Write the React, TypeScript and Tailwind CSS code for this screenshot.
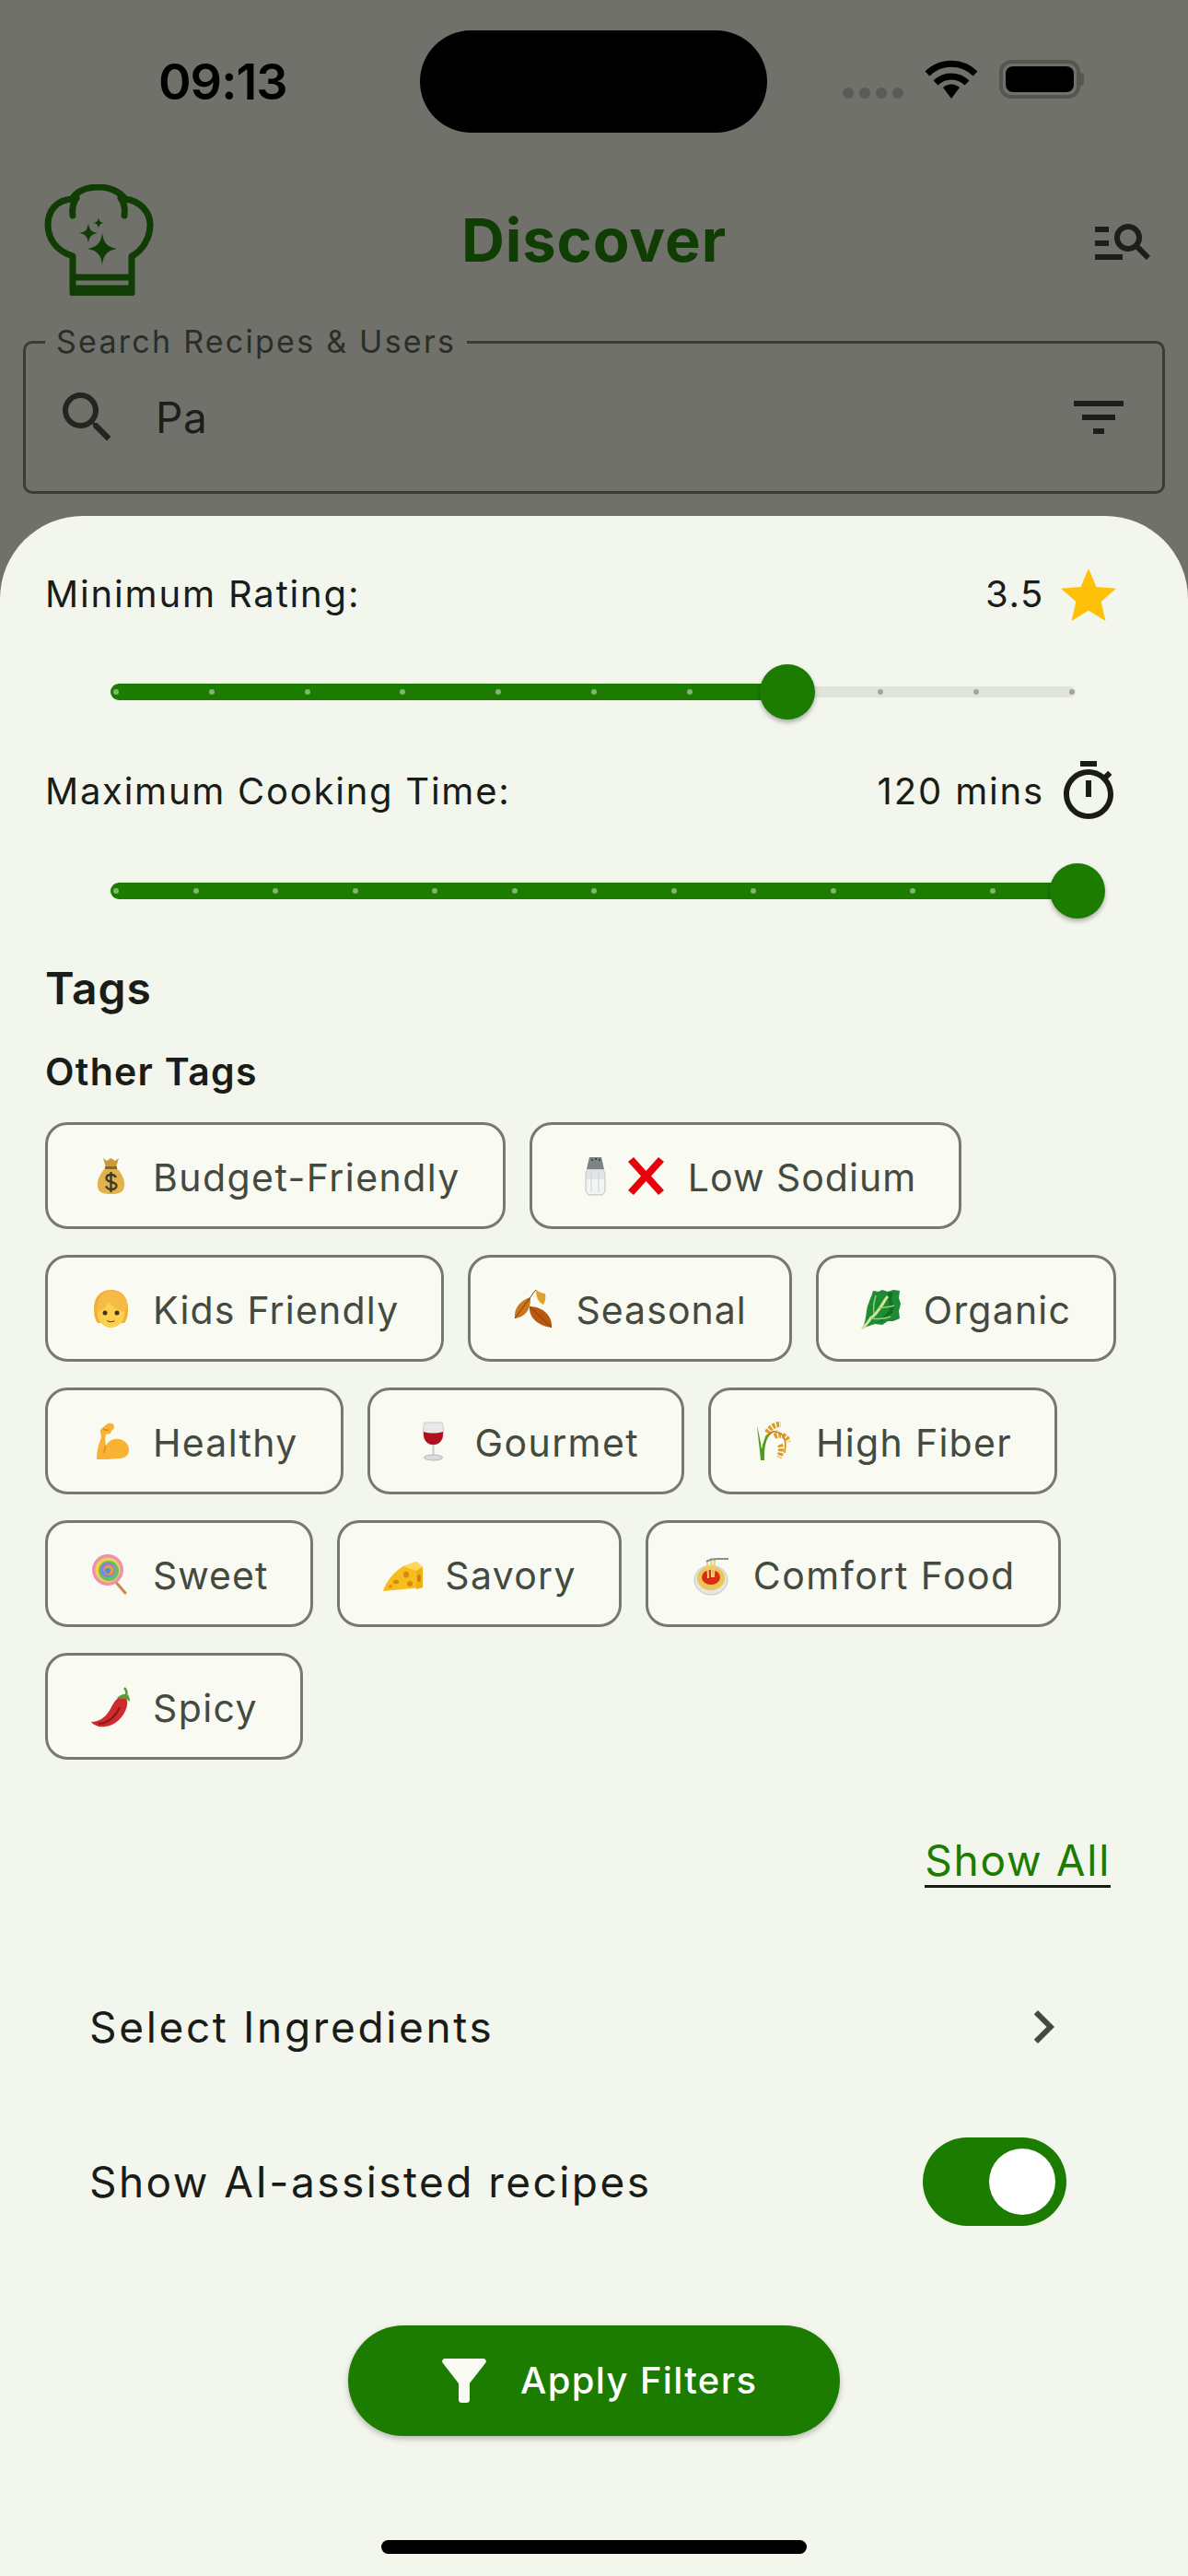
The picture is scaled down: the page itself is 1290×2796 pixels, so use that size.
import React from "react";

const font = "font-['Inter','Liberation_Sans',sans-serif]";

const MoneyBag = () => (
  <svg viewBox="0 0 55 55" className="w-full h-full">
    <path d="M19 8l4 3 4.500-3 4.500 3 4-3-3 10H22z" fill="#c89a3c" />
    <path d="M22 18C15 25 12 33 13 39c1 7 7 8 14.500 8S41 46 42 39c1-6-2-14-9-21z" fill="#e2b34d" />
    <path d="M21 17h13v3H21z" fill="#8a6a22" />
    <path d="M33 29c-1-2-3-3-5.500-3-3 0-5 1.500-5 4 0 5 11 3 11 8 0 2.500-2.500 4-5.500 4s-5-1.500-6-3.500M27.500 23v22" fill="none" stroke="#3f3a2c" strokeWidth="2.400" />
  </svg>
);

const Salt = () => (
  <svg viewBox="0 0 55 55" className="w-full h-full">
    <path d="M19 20h17l2 5v19l-3 4H20l-3-4V25z" fill="#e2e5e5" stroke="#c3c7c6" strokeWidth="1" />
    <path d="M18 31h19v13l-2 3H20l-2-3z" fill="#f3f4f4" />
    <path d="M23 22v23M31 22v23" stroke="#cfd3d3" strokeWidth="1" />
    <path d="M21 7h13l3 13H18z" fill="#7d8285" />
    <circle cx="24" cy="10" r="1" fill="#2f3336" />
    <circle cx="28" cy="9" r="1" fill="#2f3336" />
    <circle cx="32" cy="10" r="1" fill="#2f3336" />
  </svg>
);

const CrossMark = () => (
  <svg viewBox="0 0 55 55" className="w-full h-full">
    <path d="M14 7l13.500 15L41 7l6 5-14 15.500L47 43l-6 5-13.500-15L14 48l-6-5 14-15.500L8 12z" fill="#e9000b" />
  </svg>
);

const Child = () => (
  <svg viewBox="0 0 55 55" className="w-full h-full">
    <path d="M27.500 7C16 7 9 15 9 27c0 7 1 12 4 16h29c3-4 4-9 4-16 0-12-7-20-18.500-20z" fill="#f4ac38" />
    <ellipse cx="27.500" cy="32" rx="15" ry="16" fill="#fcd04c" />
    <path d="M12 31c6-1 11-6 13-12 3 6 10 11 18 12l2-9C42 13 36 8 28 8 18 8 12 16 12 31z" fill="#f6bb45" />
    <circle cx="21" cy="32" r="2.500" fill="#4a3216" />
    <circle cx="34" cy="32" r="2.500" fill="#4a3216" />
    <path d="M23 40c3 1.500 6 1.500 9 0-1 3-8 3-9 0z" fill="#7a3d14" />
  </svg>
);

const Leaves = () => (
  <svg viewBox="0 0 55 55" className="w-full h-full">
    <path d="M24 15C12 19 6 27 7 38c10-1 18-9 17-23z" fill="#c9761d" />
    <path d="M30 7c3 2 7 4 10 4 1 4 0 9-2 12-6-3-8-9-8-16z" fill="#dfa02e" />
    <path d="M23 25c-1 12 9 21 24 23 1-12-9-23-24-23z" fill="#b9590f" />
    <path d="M23 25l24 23M24 15L7 38M24 15c2-3 4-6 6-8" fill="none" stroke="#7a3c0c" strokeWidth="1" />
  </svg>
);

const Lettuce = () => (
  <svg viewBox="0 0 55 55" className="w-full h-full">
    <path d="M6 49c3-5 4-11 5-19 1-8 5-14 7-22l6 1 4-2 6 2 6-2 7 1-1 8 2 6-2 8 1 8-7 3-6 0-6 4-8-1-6 2z" fill="#1d8a34" />
    <path d="M34 9l5 1-1 8 3 6-2 8-6 6-9 4 12-13z" fill="#136e27" />
    <path d="M6 49c5-4 7-7 10-12 4-2 7-7 10-11 3-4 5-9 8-12" fill="none" stroke="#cfe59c" strokeWidth="3" />
    <path d="M19 33c-1-6 0-13 2-20M25 27c4-1 10-1 16-3M16 38c7 1 14 1 21-2" fill="none" stroke="#90cf6f" strokeWidth="1.500" />
  </svg>
);

const Muscle = () => (
  <svg viewBox="0 0 55 55" className="w-full h-full">
    <path d="M12 47c0-8 1-14 4-21 1-3 1-5 0-8-1-2 0-4 2-5l6-5c3-1 7 0 7 3 0 2-1 4-3 5l-1 3-5 1c-1 4-1 8 0 12 3-5 8-8 14-7 7 1 11 6 11 12 0 6-5 9-11 9-7 1-17 1-24 1z" fill="#f9b233" />
    <path d="M19 14c2 1 4 2 6 1M22 32c-1 3-2 5-2 8" fill="none" stroke="#d98a1d" strokeWidth="1.400" />
  </svg>
);

const Wine = () => (
  <svg viewBox="0 0 55 55" className="w-full h-full">
    <path d="M18 7h19c2 6 2 13 0 18-2 4-5 6-9.500 6S20 29 18 25c-2-5-2-12 0-18z" fill="#e8e9e8" stroke="#c9cccb" strokeWidth="1" />
    <path d="M17 17c6 2 14 2 21 0 0 3 0 6-1 8-2 4-5 6-9.500 6S20 29 18 25c-1-2-1-5-1-8z" fill="#b20f1e" />
    <path d="M26.500 31h2v13h-2z" fill="#c7cbca" />
    <ellipse cx="27.500" cy="45" rx="10" ry="3" fill="#d9dcdb" stroke="#b3b7b6" strokeWidth="1" />
  </svg>
);

const Rice = () => (
  <svg viewBox="0 0 55 55" className="w-full h-full">
    <path d="M9 10c1 12 3 26 4 38h4c0-8 0-16 3-23 3-6 8-9 13-9-7-1-12 2-15 7-2 4-3 9-4 13-1-8-3-17-5-26z" fill="#4f9d1c" />
    <path d="M20 18c3-6 9-9 15-9M28 22c6-3 13-1 15 6M34 31c2 4 1 10-1 14" fill="none" stroke="#e09a24" strokeWidth="6" strokeDasharray="3 1.500" />
    <path d="M18 23c6-8 13-7 18-3 3 3 5 9 3 20" fill="none" stroke="#cf8a1e" strokeWidth="1.500" />
  </svg>
);

const Lollipop = () => (
  <svg viewBox="0 0 55 55" className="w-full h-full">
    <path d="M30 33l13 15" stroke="#c98652" strokeWidth="3" strokeLinecap="round" />
    <circle cx="24" cy="23" r="17" fill="#f08fb4" />
    <circle cx="24" cy="23" r="13.500" fill="#f4d24a" />
    <circle cx="25" cy="24" r="11" fill="#62c06a" />
    <circle cx="24" cy="23" r="8" fill="#8f7ddb" />
    <circle cx="25" cy="23" r="5.500" fill="#f0993b" />
    <circle cx="24" cy="24" r="3" fill="#3f97dc" />
  </svg>
);

const Cheese = () => (
  <svg viewBox="0 0 55 55" className="w-full h-full">
    <path d="M6 46c2-8 11-21 22-27l14-5 7 6v22z" fill="#f7bc1e" />
    <path d="M28 19l14-5 7 6-7 4z" fill="#ffd75a" />
    <path d="M42 24l7-4v22l-7 2z" fill="#efb112" />
    <ellipse cx="20" cy="36" rx="3" ry="2.200" fill="#d88a0b" />
    <ellipse cx="31" cy="28" rx="3" ry="3.500" fill="#d88a0b" />
    <ellipse cx="35" cy="38" rx="3" ry="3" fill="#d88a0b" />
    <ellipse cx="45" cy="32" rx="1.800" ry="4" fill="#c77d08" />
    <ellipse cx="14" cy="41" rx="2" ry="1.500" fill="#d88a0b" />
  </svg>
);

const Spaghetti = () => (
  <svg viewBox="0 0 55 55" className="w-full h-full">
    <ellipse cx="27" cy="34" rx="18" ry="16" fill="#e5e6e4" stroke="#c7c9c7" strokeWidth="1" />
    <ellipse cx="27" cy="32" rx="15" ry="13" fill="#eec655" />
    <ellipse cx="27" cy="31" rx="10" ry="8" fill="#d62f14" />
    <path d="M23 12c0 8 1 14 1 20M27 10c1 8 1 15 1 21M31 12c0 6-1 13-1 19" fill="none" stroke="#eccf72" strokeWidth="2" />
    <path d="M22 14c6-4 12-3 17-3h7" fill="none" stroke="#8b8d8c" strokeWidth="2" />
  </svg>
);

const Chili = () => (
  <svg viewBox="0 0 55 55" className="w-full h-full">
    <path d="M40 15c4 2 6 5 5 11-2 11-12 22-24 23-6 1-12-1-15-5 8 0 14-4 19-11 4-6 6-14 15-18z" fill="#cf2a2d" />
    <path d="M14 46c9 0 18-7 23-18" fill="none" stroke="#8e1518" strokeWidth="2" />
    <path d="M34 18c3-3 7-5 11-4 2 1 3 4 3 8l-4-3-5 0z" fill="#5c9a34" />
    <path d="M44 15c1-3 0-6-2-8" fill="none" stroke="#5c9a34" strokeWidth="2.500" />
  </svg>
);

const tags = [
  { label: "Budget-Friendly", icons: [MoneyBag], spacing: "tracking-[1.45px]" },
  { label: "Low Sodium", icons: [Salt, CrossMark], spacing: "tracking-[1px]" },
  { label: "Kids Friendly", icons: [Child], spacing: "tracking-[1.2px]" },
  { label: "Seasonal", icons: [Leaves], spacing: "tracking-[1.05px]" },
  { label: "Organic", icons: [Lettuce], spacing: "tracking-[1.2px]" },
  { label: "Healthy", icons: [Muscle], spacing: "tracking-[1.3px]" },
  { label: "Gourmet", icons: [Wine], spacing: "tracking-[1.4px]" },
  { label: "High Fiber", icons: [Rice], spacing: "tracking-[1.3px]" },
  { label: "Sweet", icons: [Lollipop], spacing: "tracking-[1px]" },
  { label: "Savory", icons: [Cheese], spacing: "tracking-[1.3px]" },
  { label: "Comfort Food", icons: [Spaghetti], spacing: "tracking-[1.5px]" },
  { label: "Spicy", icons: [Chili], spacing: "tracking-[1.4px]" },
];

const Icon = ({ d, className }: { d: string; className: string }) => (
  <svg viewBox="0 0 24 24" className={className} fill="currentColor">
    <path d={d} />
  </svg>
);

// ticks sit on the track, thumb is placed from the slider value
const Slider = ({ thumb, ticks, first }: { thumb: number; ticks: number; first?: boolean }) => {
  const list = Array.from({ length: ticks + 1 }, (_, i) => 6 + (i * 1038) / ticks);
  return (
    <div className={`relative h-[60px] w-[1048px] ml-[71px] ${first ? "mt-[38px]" : "mt-[42px]"}`}>
      <div className="absolute top-[24px] left-0 right-0 h-[12px] rounded-full bg-[#e1e4db]" />
      <div
        className="absolute top-[21px] left-0 h-[18px] rounded-l-full bg-[#1b7c00]"
        style={{ width: thumb }}
      />
      {list.map((x) => (
        <div
          key={x}
          className={`absolute top-[27px] h-[6px] w-[6px] rounded-full ${x < thumb ? "bg-[#7fb56f]" : "bg-[#a3a69d]"}`}
          style={{ left: x - 3 }}
        />
      ))}
      <div
        className="absolute top-0 h-[60px] w-[60px] rounded-full bg-[#1b7c00] shadow-[0_3px_5px_rgba(0,0,0,0.3)]"
        style={{ left: thumb - 30 }}
      />
    </div>
  );
};

const Chip = ({ label, icons, spacing }: { label: string; icons: React.ComponentType[]; spacing: string }) => (
  <div className="flex h-[116px] items-center rounded-[24px] border-[3px] border-[#767a6e] bg-[#f9faf2] pl-[41px] pr-[46px]">
    <div className="flex mr-[18px]">
      {icons.map((Glyph, i) => (
        <div key={i} className="h-[55px] w-[55px]">
          <Glyph />
        </div>
      ))}
    </div>
    <span className={`mt-[6px] text-[41px] font-normal text-[#444a3f] ${spacing}`}>{label}</span>
  </div>
);

export default function App() {
  return (
    <div className={`flex h-[2796px] w-[1290px] flex-col overflow-hidden bg-[#70716b] ${font}`}>
      {/* status bar */}
      <div className="flex h-[111px] mt-[33px] items-center pl-[172px]">
        <span className="w-[284px] text-[54px] font-semibold leading-none tracking-[-1px] text-black">09:13</span>
        <div className="h-[111px] w-[377px] rounded-full bg-black" />
        <div className="flex items-end ml-[82px] mb-[5px]">
          <div className="flex gap-[6px]">
            <div className="h-[12px] w-[12px] rounded-full bg-[#5a5b56]" />
            <div className="h-[12px] w-[12px] rounded-full bg-[#5a5b56]" />
            <div className="h-[12px] w-[12px] rounded-full bg-[#5a5b56]" />
            <div className="h-[12px] w-[12px] rounded-full bg-[#5a5b56]" />
          </div>
          <svg viewBox="0 0 58 42" className="h-[42px] w-[58px] ml-[23px]">
            <path d="M29 42L20 30a13 13 0 0 1 18 0z" fill="#000" />
            <path d="M12 25a24 24 0 0 1 34 0M3 15a37 37 0 0 1 52 0" fill="none" stroke="#000" strokeWidth="7" />
          </svg>
          <div className="flex items-center ml-[23px]">
            <div className="flex h-[42px] w-[88px] items-center justify-center rounded-[13px] border-[4px] border-[#55564f]">
              <div className="h-[28px] w-[74px] rounded-[8px] bg-black" />
            </div>
            <div className="h-[14px] w-[4px] rounded-r-full bg-[#55564f]" />
          </div>
        </div>
      </div>

      {/* header */}
      <div className="flex h-[121px] mt-[56px] items-center px-[35px]">
        <div className="flex-1">
          <svg viewBox="0 0 120 121" className="ml-[13px] h-[121px] w-[120px] text-[#0f3d03]" fill="none" stroke="currentColor">
            <path d="M31 118V78C12 72 4 58 4 44c0-16 10-27 26-28C36 7 47 3 59 3s23 5 29 13c16 2 27 14 27 28 0 14-8 28-20 34v40z" strokeWidth="7" strokeLinejoin="round" />
            <path d="M31 34c-1-8 0-14 4-19M87 34c1-8 0-14-4-19" strokeWidth="7" strokeLinecap="round" />
            <path d="M31 101h64" strokeWidth="7" />
            <path d="M31 114h64" strokeWidth="9" />
            <g fill="currentColor" stroke="none">
              <path d="M63 52c1 11 5 16 16 18-11 2-15 7-16 18-1-11-5-16-16-18 11-2 15-7 16-18z" />
              <path d="M48 42c1 7 3 10 10 11-7 1-9 4-10 11-1-7-3-10-10-11 7-1 9-4 10-11z" />
              <path d="M59 36c.5 4 2 5.500 6 6-4 .5-5.500 2-6 6-.5-4-2-5.500-6-6 4-.5 5.500-2 6-6z" />
            </g>
          </svg>
        </div>
        <span className="text-[65px] font-bold leading-none tracking-[0.9px] text-[#0f3d03]">Discover</span>
        <div className="flex flex-1 justify-end">
          <Icon
            className="h-[72px] w-[72px] text-[#1c1e19]"
            d="M7 9H2V7h5v2zm0 3H2v2h5v-2zm13.590 7-3.830-3.830c-.8.520-1.740.830-2.760.830-2.760 0-5-2.240-5-5s2.240-5 5-5 5 2.240 5 5c0 1.020-.310 1.960-.830 2.750L22 17.590 20.590 19zM17 11c0-1.650-1.350-3-3-3s-3 1.350-3 3 1.350 3 3 3 3-1.350 3-3zM2 19h10v-2H2v2z"
          />
        </div>
      </div>

      {/* search field */}
      <div className="relative mx-[25px] mt-[49px] flex h-[166px] items-center rounded-[10px] border-[3px] border-[#3a3c35] pl-[31px] pr-[33px]">
        <span className="absolute -top-[24px] left-[21px] bg-[#70716b] px-[12px] text-[34px] font-[375] leading-[44px] tracking-[2.25px] text-[#2b2d27]">
          Search Recipes &amp; Users
        </span>
        <Icon
          className="h-[72px] w-[72px] text-[#23251f]"
          d="M15.500 14h-.790l-.280-.270A6.471 6.471 0 0 0 16 9.500 6.500 6.500 0 1 0 9.500 16c1.610 0 3.090-.590 4.230-1.570l.270.280v.790l5 4.990L20.490 19l-4.990-5zm-6 0C7.010 14 5 11.990 5 9.500S7.010 5 9.500 5 14 7.010 14 9.500 11.990 14 9.500 14z"
        />
        <span className="ml-[38px] flex-1 text-[46px] font-[375] leading-none tracking-[0.5px] text-[#1c1e19]">Pa</span>
        <Icon className="h-[72px] w-[72px] text-[#1c1e19]" d="M10 18h4v-2h-4v2zM3 6v2h18V6H3zm3 7h12v-2H6v2z" />
      </div>

      {/* bottom sheet */}
      <div className="mt-[24px] flex flex-1 flex-col rounded-t-[90px] bg-[#f3f6ed] pt-[51px] pl-[49px] font-[375] text-[#1a1c18]">
        <div className="flex h-[72px] w-[1169px] items-center justify-between">
          <span className="-mt-[5px] text-[40px] tracking-[1.85px]">Minimum Rating:</span>
          <div className="flex items-center gap-[12px]">
            <span className="-mt-[4px] text-[40px] tracking-[1.6px]">3.5</span>
            <Icon
              className="h-[72px] w-[72px] text-[#ffc107]"
              d="M12 17.270 18.180 21l-1.640-7.030L22 9.240l-7.190-.610L12 2 9.190 8.630 2 9.240l5.460 4.730L5.820 21z"
            />
          </div>
        </div>
        <Slider thumb={735} ticks={10} first />

        <div className="mt-[42px] flex h-[72px] w-[1169px] items-center justify-between">
          <span className="text-[40px] tracking-[1.75px]">Maximum Cooking Time:</span>
          <div className="flex items-center gap-[12px]">
            <span className="text-[40px] tracking-[1.85px]">120 mins</span>
            <Icon
              className="h-[72px] w-[72px]"
              d="M15 1H9v2h6V1zm-4 13h2V8h-2v6zm8.030-6.610l1.420-1.420c-.430-.510-.9-.990-1.410-1.410l-1.420 1.420C16.070 4.740 14.120 4 12 4c-4.970 0-9 4.030-9 9s4.020 9 9 9 9-4.030 9-9c0-2.120-.740-4.070-1.970-5.610zM12 20c-3.870 0-7-3.130-7-7s3.130-7 7-7 7 3.130 7 7-3.130 7-7 7z"
            />
          </div>
        </div>
        <Slider thumb={1050} ticks={12} />

        <h2 className="mt-[46px] text-[48px] font-semibold leading-[60px] tracking-[0.9px]">Tags</h2>
        <h3 className="mt-[34px] text-[41px] font-semibold leading-[52px] tracking-[1.3px]">Other Tags</h3>

        <div className="mt-[29px] flex flex-wrap gap-x-[26px] gap-y-[28px] pr-[40px]">
          {tags.map((tag) => (
            <Chip key={tag.label} label={tag.label} icons={tag.icons} spacing={tag.spacing} />
          ))}
        </div>

        <div className="mt-[82px] flex pr-[84px] justify-end">
          <span className="border-b-[3px] border-[#1a1c18] text-[46px] leading-[54px] tracking-[1.7px] text-[#1b7c00]">
            Show All
          </span>
        </div>

        <div className="mt-[115px] flex h-[72px] items-center justify-between pl-[48px] pr-[121px]">
          <span className="text-[46px] tracking-[2.65px]">Select Ingredients</span>
          <Icon className="h-[72px] w-[72px] text-[#444a3f]" d="M10 6 8.590 7.410 13.170 12l-4.580 4.590L10 18l6-6z" />
        </div>

        <div className="mt-[84px] flex h-[96px] items-center justify-between pl-[48px] pr-[132px]">
          <span className="text-[46px] tracking-[2.45px]">Show AI-assisted recipes</span>
          <div className="flex h-[96px] w-[156px] items-center justify-end rounded-full bg-[#1b7c00] pr-[12px]">
            <div className="h-[72px] w-[72px] rounded-full bg-white" />
          </div>
        </div>

        <div className="mt-[108px] ml-[329px] flex h-[120px] w-[534px] items-center rounded-full bg-[#1b7c00] pl-[90px] shadow-[0_3px_6px_rgba(0,0,0,0.25)]">
          <Icon
            className="h-[72px] w-[72px] text-[#f9faf2]"
            d="M4.250 5.610C6.270 8.200 10 13 10 13v6c0 .550.450 1 1 1h2c.550 0 1-.450 1-1v-6s3.720-4.800 5.740-7.390c.510-.660.040-1.610-.790-1.610H5.040c-.830 0-1.300.950-.790 1.610z"
          />
          <span className="ml-[25px] text-[40px] font-medium tracking-[1.35px] text-white">Apply Filters</span>
        </div>

        <div className="mt-[113px] ml-[365px] h-[15px] w-[462px] rounded-full bg-black" />
      </div>
    </div>
  );
}
